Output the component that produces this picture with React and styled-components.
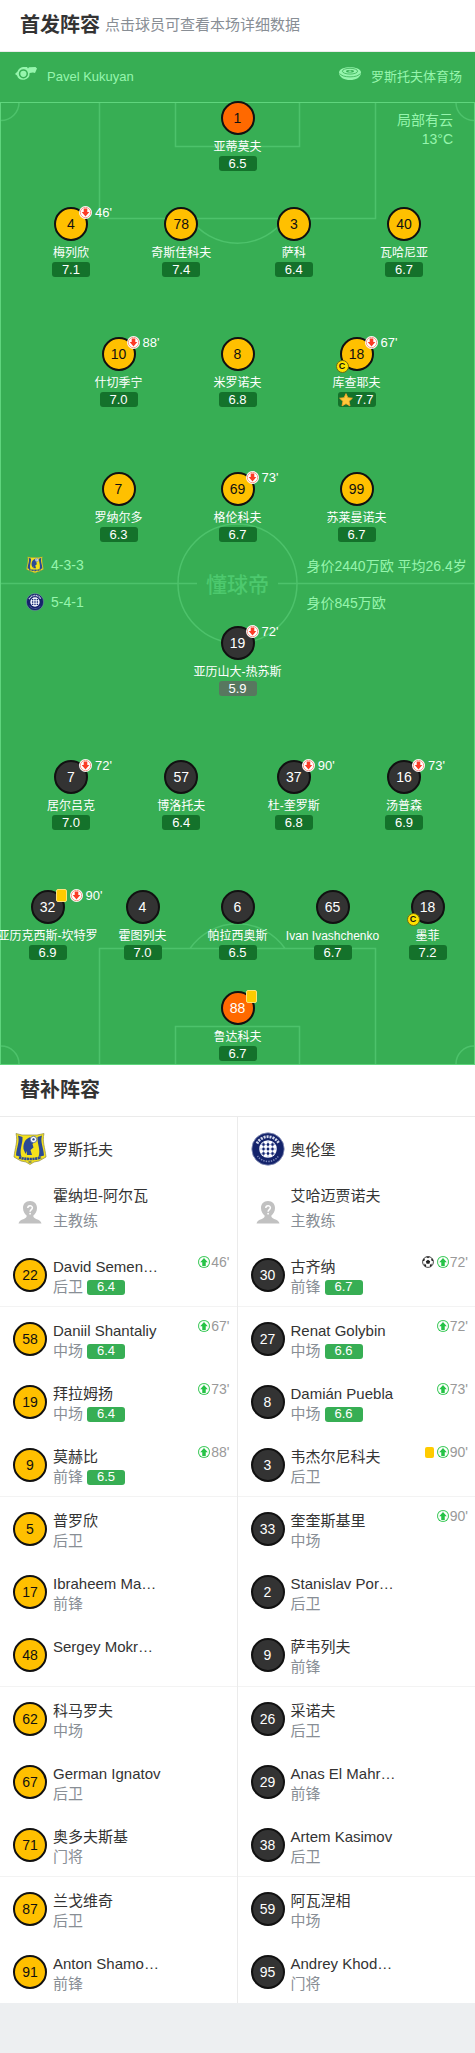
import styled, { createGlobalStyle, css } from "styled-components";

// gap = distance to the line above it
const homeLines = [
  { gap: 0, players: [{ no: 1, name: "亚蒂莫夫", score: "6.5", keeper: true }] },
  {
    gap: 36,
    players: [
      { no: 4, name: "梅列欣", score: "7.1", off: 46 },
      { no: 78, name: "奇斯佳科夫", score: "7.4" },
      { no: 3, name: "萨科", score: "6.4" },
      { no: 40, name: "瓦哈尼亚", score: "6.7" },
    ],
  },
  {
    gap: 60,
    players: [
      { no: 10, name: "什切季宁", score: "7.0", off: 88 },
      { no: 8, name: "米罗诺夫", score: "6.8" },
      { no: 18, name: "库查耶夫", score: "7.7", off: 67, captain: true, best: true },
    ],
  },
  {
    gap: 65,
    players: [
      { no: 7, name: "罗纳尔多", score: "6.3" },
      { no: 69, name: "格伦科夫", score: "6.7", off: 73 },
      { no: 99, name: "苏莱曼诺夫", score: "6.7" },
    ],
  },
];

const awayLines = [
  { gap: 0, players: [{ no: 19, name: "亚历山大-热苏斯", score: "5.9", off: 72, low: true }] },
  {
    gap: 64,
    players: [
      { no: 7, name: "居尔吕克", score: "7.0", off: 72 },
      { no: 57, name: "博洛托夫", score: "6.4" },
      { no: 37, name: "杜-奎罗斯", score: "6.8", off: 90 },
      { no: 16, name: "汤普森", score: "6.9", off: 73 },
    ],
  },
  {
    gap: 60,
    players: [
      { no: 32, name: "亚历克西斯-坎特罗", score: "6.9", off: 90, card: true },
      { no: 4, name: "霍图列夫", score: "7.0" },
      { no: 6, name: "帕拉西奥斯", score: "6.5" },
      { no: 65, name: "Ivan Ivashchenko", score: "6.7" },
      { no: 18, name: "墨菲", score: "7.2", captain: true },
    ],
  },
  { gap: 31, players: [{ no: 88, name: "鲁达科夫", score: "6.7", keeper: true, card: true }] },
];

const homeBench = [
  { no: 22, name: "David Semen…", role: "后卫", score: "6.4", on: 46 },
  { no: 58, name: "Daniil Shantaliy", role: "中场", score: "6.4", on: 67 },
  { no: 19, name: "拜拉姆扬", role: "中场", score: "6.4", on: 73 },
  { no: 9, name: "莫赫比", role: "前锋", score: "6.5", on: 88 },
  { no: 5, name: "普罗欣", role: "后卫" },
  { no: 17, name: "Ibraheem Ma…", role: "前锋" },
  { no: 48, name: "Sergey Mokr…", role: "" },
  { no: 62, name: "科马罗夫", role: "中场" },
  { no: 67, name: "German Ignatov", role: "后卫" },
  { no: 71, name: "奥多夫斯基", role: "门将" },
  { no: 87, name: "兰戈维奇", role: "后卫" },
  { no: 91, name: "Anton Shamo…", role: "前锋" },
];

const awayBench = [
  { no: 30, name: "古齐纳", role: "前锋", score: "6.7", on: 72, goal: true },
  { no: 27, name: "Renat Golybin", role: "中场", score: "6.6", on: 72 },
  { no: 8, name: "Damián Puebla", role: "中场", score: "6.6", on: 73 },
  { no: 3, name: "韦杰尔尼科夫", role: "后卫", on: 90, card: true },
  { no: 33, name: "奎奎斯基里", role: "中场", on: 90 },
  { no: 2, name: "Stanislav Por…", role: "后卫" },
  { no: 9, name: "萨韦列夫", role: "前锋" },
  { no: 26, name: "采诺夫", role: "后卫" },
  { no: 29, name: "Anas El Mahr…", role: "前锋" },
  { no: 38, name: "Artem Kasimov", role: "后卫" },
  { no: 59, name: "阿瓦涅相", role: "中场" },
  { no: 95, name: "Andrey Khod…", role: "门将" },
];

export default function App() {
  return (
    <>
      <GlobalStyle />
      <main>
        <SectionHead>
          <h2>首发阵容</h2>
          <span>点击球员可查看本场详细数据</span>
        </SectionHead>

        <MatchBar>
          <MatchFact>
            <WhistleIcon />
            Pavel Kukuyan
          </MatchFact>
          <MatchFact>
            <StadiumIcon />
            罗斯托夫体育场
          </MatchFact>
        </MatchBar>

        <Pitch>
          <PitchLines />
          <Weather>
            局部有云
            <br />
            13°C
          </Weather>
          <Half>
            {homeLines.map((line, i) => (
              <Line key={i} gap={line.gap} players={line.players} team="home" />
            ))}
          </Half>
          <Midfield>
            <Formation>
              <RostovCrest size={18} />
              4-3-3
            </Formation>
            <Watermark>懂球帝</Watermark>
            <Worth>身价2440万欧 平均26.4岁</Worth>
            <Formation>
              <OrenburgCrest size={18} />
              5-4-1
            </Formation>
            <Worth>身价845万欧</Worth>
          </Midfield>
          <Half>
            {awayLines.map((line, i) => (
              <Line key={i} gap={line.gap} players={line.players} team="away" />
            ))}
          </Half>
        </Pitch>

        <SectionHead>
          <h2>替补阵容</h2>
        </SectionHead>
        <Benches>
          <Bench
            team="home"
            crest={<RostovCrest size={34} />}
            title="罗斯托夫"
            coach="霍纳坦-阿尔瓦"
            players={homeBench}
          />
          <Bench
            team="away"
            crest={<OrenburgCrest size={34} />}
            title="奥伦堡"
            coach="艾哈迈贾诺夫"
            players={awayBench}
          />
        </Benches>
      </main>
    </>
  );
}

function Line({ gap, players, team }) {
  return (
    <StyledLine $count={players.length} $gap={gap}>
      {players.map((p) => (
        <Player key={p.no} type="button">
          <Shirt $team={team} $keeper={p.keeper}>
            {p.no}
            {(p.card || p.off) && (
              <PitchEvents>
                {p.card && <Card $outlined />}
                {p.off && <SubIcon type="off" />}
                {p.off && <span>{p.off}&apos;</span>}
              </PitchEvents>
            )}
            {p.captain && <Captain>C</Captain>}
          </Shirt>
          <PlayerName>{p.name}</PlayerName>
          <Score $tone={p.low ? "low" : "pitch"}>
            {p.best && <StarIcon />}
            {p.score}
          </Score>
        </Player>
      ))}
    </StyledLine>
  );
}

function Bench({ team, crest, title, coach, players }) {
  return (
    <StyledBench>
      <TeamRow>
        {crest}
        <p>{title}</p>
      </TeamRow>
      <CoachRow>
        <Avatar />
        <div>
          <p>{coach}</p>
          <p className="role">主教练</p>
        </div>
      </CoachRow>
      <ul>
        {players.map((p) => (
          <BenchRow key={p.no}>
            <Shirt $team={team}>{p.no}</Shirt>
            <BenchInfo>
              <p>{p.name}</p>
              <p className="role">
                {p.role}
                {p.score && <Score>{p.score}</Score>}
              </p>
            </BenchInfo>
            {p.on && (
              <BenchEvents>
                {p.goal && <BallIcon />}
                {p.card && <Card />}
                <SubIcon type="on" />
                <span>{p.on}&apos;</span>
              </BenchEvents>
            )}
          </BenchRow>
        ))}
      </ul>
    </StyledBench>
  );
}

/********************* icons *************************/
function PitchLines() {
  return (
    <StyledPitchLines viewBox="0 0 475 964" preserveAspectRatio="none" aria-hidden="true">
      <g fill="none" stroke="#4dc26b" strokeWidth="1.5">
        <path d="M99.5 2v115.500h276V2M175.500 2v43.500h124V2M190 117.500a58 58 0 0 0 95 0" />
        <path d="M1 19.500a18 18 0 0 0 18-18M474 19.500a18 18 0 0 1-18-18" />
        <path d="M99.500 963V847.500h276V963M175.500 963v-37.500h124V963M190 847.500a58 58 0 0 1 95 0" />
        <path d="M1 945a18 18 0 0 1 18 18M474 945a18 18 0 0 0-18 18" />
        <circle cx="237.500" cy="482.500" r="59.500" />
        <path d="M1 482.500h196M278 482.500h196" />
      </g>
      <rect x="0.500" y="1.500" width="474" height="962" fill="none" stroke="#5fd57d" />
    </StyledPitchLines>
  );
}

function WhistleIcon() {
  return (
    <svg width="22" height="14" viewBox="0 0 22 14" aria-hidden="true">
      <path
        fill="#96f5ad"
        fillRule="evenodd"
        d="M8 0a7 7 0 0 0-5.500 4.500L0 7l2 1.500A6.500 6.500 0 0 0 14.600 6L18 5.500 20 6l2-4.500L20.500 0 14 .3l-1 1.200L12 0zM8.400 2.200a4.600 4.600 0 1 1 0 9.200 4.600 4.600 0 0 1 0-9.200zM8.400 3.700a3.100 3.100 0 1 0 0 6.200 3.100 3.100 0 0 0 0-6.200z"
      />
    </svg>
  );
}

function StadiumIcon() {
  return (
    <svg width="22" height="13" viewBox="0 0 22 13" aria-hidden="true">
      <path d="M0 5.500C0-1.500 22-1.500 22 5.500c0 10-22 10-22 0z" fill="#96f5ad" />
      <ellipse cx="11" cy="4.200" rx="7.600" ry="2.900" fill="none" stroke="#37ae54" strokeWidth="0.800" />
      <ellipse cx="11" cy="4.200" rx="4" ry="1.300" fill="#37ae54" />
      <ellipse cx="11" cy="4.200" rx="1.600" ry="0.600" fill="#96f5ad" />
      <path d="M.8 6.500c2 4.500 18.400 4.500 20.400 0" fill="none" stroke="#37ae54" strokeWidth="0.800" />
    </svg>
  );
}

function SubIcon({ type }) {
  const off = type === "off";
  const color = off ? "#fb3b25" : "#25c346";
  return (
    <svg width={off ? 13 : 12} height={off ? 13 : 12} viewBox="0 0 13 13" aria-hidden="true">
      <circle cx="6.500" cy="6.500" r="6.500" fill={off ? "#fff" : color} />
      <circle cx="6.500" cy="6.500" r="5.200" fill="#fff" stroke={off ? "#f4705f" : "#fff"} strokeWidth="0.700" />
      <path
        fill={color}
        d={off ? "M4.700 2.500h3.600v3.600h2L6.500 10.500 2.700 6.100h2z" : "M4.600 10.700h3.800V6.800h2.200L6.500 2.200 2.400 6.800h2.200z"}
      />
    </svg>
  );
}

function StarIcon() {
  return (
    <svg width="14" height="14" viewBox="0 0 14 14" aria-hidden="true">
      <path
        d="M7 .6l1.900 4.100 4.500.5-3.300 3.100.9 4.600L7 10.700l-4 2.200.9-4.600L.6 5.200l4.500-.5z"
        fill="#ffc83a"
        stroke="#f9a628"
        strokeWidth="0.800"
        strokeLinejoin="round"
      />
    </svg>
  );
}

function BallIcon() {
  return (
    <svg width="12" height="12" viewBox="0 0 12 12" aria-hidden="true">
      <circle cx="6" cy="6" r="5.400" fill="#fff" stroke="#333" strokeWidth="0.900" />
      <path
        fill="#222"
        d="M6 3.700l2.200 1.600-.8 2.500H4.600l-.8-2.500zM4 .8h4L6 2.200zM.6 5l1-2.500 1.300.4-.6 2zM11.400 5l-1-2.500-1.300.4.6 2zM2.200 9.800l.3-2.200 1.700 1.300-.3 2zM9.800 9.800l-.3-2.200-1.700 1.300.3 2z"
      />
    </svg>
  );
}

function Avatar() {
  return (
    <svg width="34" height="34" viewBox="0 0 34 34" aria-hidden="true">
      <path
        fill="#c1c1c1"
        d="M17 6c4.500 0 7 3 7 7 0 3.500-1.800 6-3.600 7.600-.3 1.800.8 2.600 2.800 3.300 3 1 4.800 1.900 5.300 4.600h-23c.5-2.700 2.300-3.600 5.300-4.600 2-.7 3.100-1.500 2.800-3.300C11.800 19 10 16.500 10 13c0-4 2.500-7 7-7z"
      />
      <path d="M14.800 13c0-3 4.600-3 4.600-.2 0 1.800-2.300 1.900-2.300 4" fill="none" stroke="#fff" strokeWidth="1.500" />
      <circle cx="17.100" cy="18.700" r="0.900" fill="#fff" />
    </svg>
  );
}

function RostovCrest({ size }) {
  return (
    <svg width={size} height={size} viewBox="0 0 34 34" aria-hidden="true">
      <path
        d="M3 1.500l6 1.500h15l7-1.500c-2 8 1 14 2 23.500l-7 4-5 1-4 2.500-4-2.500-5-1-7-4C2 15.500 5 9.500 3 1.500z"
        fill="#f5e21b"
        stroke="#8d8a4a"
        strokeWidth="0.700"
      />
      <path
        d="M5 3.500L9.500 5c.5 7-3.500 12-1 20l-5.500-1.500C3.500 15 7 10 5 3.500zM29 3.500L24.500 5c-.5 7 3.500 12 1 20l5.500-1.500C30.500 15 27 10 29 3.500z"
        fill="#2b4a94"
      />
      <path d="M17.500 5c-5 1.500-7.500 6-7 12l2 5 1-3 .5 4h5l-1.500-5 3-2.500-1-3.500 1.500-2-3.500-2z" fill="#2b4a94" />
      <circle cx="20.500" cy="7.500" r="3.200" fill="#fff" stroke="#2b4a94" strokeWidth="0.700" />
      <path d="M20.500 6l1.400 1-.5 1.600h-1.800L19.100 7z" fill="#2b4a94" />
      <path d="M6 25.500c6 2 16 2 22 0" fill="none" stroke="#2b4a94" strokeWidth="2.600" strokeDasharray="2.200 0.500" />
      <path d="M15.500 30h3" stroke="#2b4a94" strokeWidth="1" />
    </svg>
  );
}

function OrenburgCrest({ size }) {
  return (
    <svg width={size} height={size} viewBox="0 0 34 34" aria-hidden="true">
      <circle cx="17" cy="17" r="16.200" fill="#14236b" stroke="#8f98bd" strokeWidth="0.800" />
      <path d="M6 11.500a12.300 12.300 0 0 1 22 0" fill="none" stroke="#d5daec" strokeWidth="2.800" strokeDasharray="2 1" />
      <path d="M6.500 24a12.800 12.800 0 0 0 21 0" fill="none" stroke="#7f8bbd" strokeWidth="1.600" strokeDasharray="1.300 1.200" />
      <circle cx="17" cy="17" r="8.800" fill="#fff" />
      <path
        d="M12.500 9.500v15M17 8v18M21.500 9.500v15M9.500 12.500h15M8 17h18M9.500 21.500h15"
        stroke="#8fa2d4"
        strokeWidth="0.800"
      />
      <path
        d="M12.500 11.300v2.400M12.500 15.800v2.400M12.500 20.300v2.400M17 11.300v2.400M17 15.800v2.400M17 20.300v2.400M21.500 11.300v2.400M21.500 15.800v2.400M21.500 20.300v2.400"
        stroke="#14236b"
        strokeWidth="2.200"
      />
    </svg>
  );
}

/********************* styled component *************************/
const GlobalStyle = createGlobalStyle`
  * {
    box-sizing: border-box;
    margin: 0;
    padding: 0;
  }

  body {
    background: #edeff1;
    color: #333;
    font-family: "Liberation Sans", "Noto Sans CJK SC", sans-serif;
    font-size: 15px;
    overflow-x: hidden;
  }

  main {
    overflow: hidden;
  }

  ul {
    list-style: none;
  }

  svg {
    display: block;
    flex-shrink: 0;
  }
`;

const SectionHead = styled.header`
  align-items: center;
  background: #fff;
  border-bottom: 1px solid #ebebeb;
  display: flex;
  gap: 5px;
  height: 52px;
  padding: 0 20px 4px;

  h2 {
    font-size: 20px;
    font-weight: 700;
  }

  span {
    color: #888e95;
  }
`;

const MatchBar = styled.div`
  align-items: center;
  background: #37ae54;
  display: flex;
  height: 49px;
  justify-content: space-between;
  padding: 0 13px 0 15px;
`;

const MatchFact = styled.div`
  align-items: center;
  color: #96f5ad;
  display: flex;
  font-size: 13px;
  gap: 10px;
  line-height: 20px;

  svg {
    margin-bottom: 6px;
  }
`;

const Pitch = styled.section`
  background: #37ae54;
  padding-bottom: 4px;
  position: relative;
`;

const StyledPitchLines = styled.svg`
  height: 100%;
  inset: 0;
  position: absolute;
  width: 100%;
`;

const Weather = styled.p`
  color: #96f5ad;
  font-size: 14px;
  line-height: 19px;
  position: absolute;
  right: 22px;
  text-align: right;
  top: 10px;
`;

const Half = styled.div`
  display: flex;
  flex-direction: column;
  position: relative;
`;

const StyledLine = styled.div`
  display: grid;
  grid-template-columns: repeat(${(props) => props.$count}, minmax(0, 1fr));
  margin-top: ${(props) => props.$gap}px;

  ${(props) =>
    props.$count === 3 &&
    css`
      padding: 0 59px;
    `}

  ${(props) =>
    props.$count === 4 &&
    css`
      grid-template-columns: 23fr 24fr 24fr 23fr;
      padding: 0 17px;
    `}
`;

const Player = styled.button`
  align-items: center;
  background: none;
  border: none;
  color: #fff;
  cursor: pointer;
  display: flex;
  flex-direction: column;
  font: inherit;
  min-width: 0;
`;

const Shirt = styled.span`
  align-items: center;
  background: #ffc000;
  border: 2px solid #111;
  border-radius: 50%;
  color: #111;
  display: flex;
  flex-shrink: 0;
  font-size: 14px;
  height: 34px;
  justify-content: center;
  position: relative;
  width: 34px;

  ${(props) =>
    props.$team === "away" &&
    css`
      background: #333;
      color: #fff;
    `}

  ${(props) =>
    props.$keeper &&
    css`
      background: #ff6900;
    `}
`;

const PitchEvents = styled.span`
  align-items: center;
  color: #fff;
  display: flex;
  font-size: 13px;
  gap: 3px;
  height: 13px;
  left: 23px;
  position: absolute;
  top: -3px;
`;

const Captain = styled.span`
  background: #ffe100;
  border: 1px solid #6f6a12;
  border-radius: 50%;
  bottom: -4px;
  color: #111;
  font-size: 9px;
  font-weight: 700;
  height: 13px;
  left: -6px;
  line-height: 11px;
  position: absolute;
  text-align: center;
  width: 13px;
`;

const Card = styled.span`
  background: #ffcb00;
  border-radius: 2px;
  height: 11px;
  width: 9px;

  ${(props) =>
    props.$outlined &&
    css`
      border: 1px solid #ffe27a;
      height: 13px;
      width: 11px;
    `}
`;

const PlayerName = styled.span`
  font-size: 12px;
  line-height: 18px;
  padding-top: 3px;
  white-space: nowrap;
`;

const Score = styled.span`
  align-items: center;
  background: #37ae54;
  border-radius: 3px;
  color: #fff;
  display: flex;
  font-size: 13px;
  height: 15px;
  justify-content: center;
  gap: 2px;
  width: 38px;

  ${(props) =>
    props.$tone === "pitch" &&
    css`
      background: #14722b;
    `}

  ${(props) =>
    props.$tone === "low" &&
    css`
      background: #58775f;
    `}
`;

const Midfield = styled.div`
  align-content: center;
  color: #96f5ad;
  display: grid;
  font-size: 14px;
  grid-template-columns: 1fr 138px 1fr;
  grid-template-rows: 37px 37px;
  height: 84px;
  padding-bottom: 2px;
  position: relative;
`;

const Formation = styled.div`
  align-items: center;
  display: flex;
  gap: 7px;
  padding-left: 26px;
`;

const Watermark = styled.div`
  align-self: center;
  color: #4dc96e;
  font-size: 21px;
  font-weight: 500;
  grid-column: 2;
  grid-row: 1 / 3;
  text-align: center;
`;

const Worth = styled.div`
  align-self: center;
  grid-column: 3;
  white-space: nowrap;
`;

const Benches = styled.section`
  background: #fff;
  display: grid;
  grid-template-columns: repeat(2, minmax(0, 1fr));
`;

const StyledBench = styled.div`
  &:first-child {
    border-right: 1px solid #ebebeb;
  }

  .role {
    color: #888e95;
  }
`;

const TeamRow = styled.div`
  align-items: center;
  display: flex;
  gap: 6px;
  height: 64px;
  padding-left: 13px;

  p {
    padding-bottom: 2px;
  }
`;

const CoachRow = styled(TeamRow)`
  height: 62px;
  line-height: 23px;
  padding-bottom: 6px;

  svg {
    margin-top: 6px;
  }
`;

const BenchRow = styled.li`
  align-items: center;
  display: flex;
  gap: 6px;
  height: 63px;
  padding: 0 7px 0 13px;

  &:nth-child(3n + 1) {
    border-bottom: 1px solid #f3f3f3;
    height: 64px;
  }
`;

const BenchInfo = styled.div`
  flex: 1;
  line-height: 20px;
  padding-top: 5px;
  white-space: nowrap;

  .role {
    align-items: center;
    display: flex;
    gap: 4px;
    height: 20px;
  }
`;

const BenchEvents = styled.div`
  align-items: center;
  align-self: flex-start;
  color: #999;
  display: flex;
  font-size: 14px;
  gap: 1px;
  line-height: 20px;
  padding-top: 9px;

  ${Card}, svg:not(:nth-last-child(2)) {
    margin-right: 2px;
  }
`;
